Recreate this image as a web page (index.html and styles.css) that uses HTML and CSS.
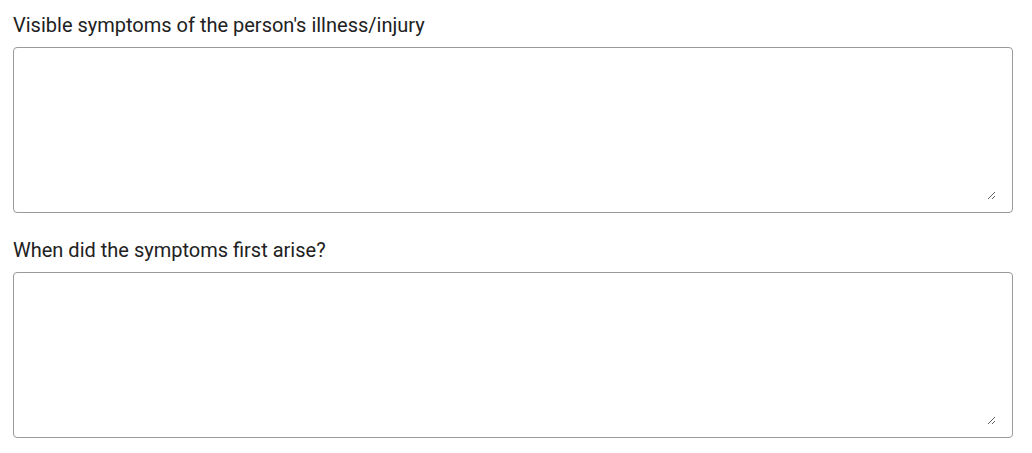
FILE: index.html
```html
<!DOCTYPE html>
<html>
<head>
<meta charset="utf-8">
<link rel="stylesheet" href="styles.css">
</head>
<body>
<form class="form">
  <div class="field">
    <label class="label" for="symptoms">Visible symptoms of the person's illness/injury</label>
    <div class="box"><textarea class="input" id="symptoms"></textarea></div>
  </div>
  <div class="field">
    <label class="label" for="arise">When did the symptoms first arise?</label>
    <div class="box"><textarea class="input" id="arise"></textarea></div>
  </div>
</form>
</body>
</html>
```
FILE: styles.css
```css
html, body {
  margin: 0;
  padding: 0;
  background: #ffffff;
}
body {
  font-family: Roboto, "Liberation Sans", Arial, sans-serif;
  color: #212121;
}
.form {
  display: flex;
  flex-direction: column;
  gap: 25px;
  padding: 13px 19px 0 13px;
}
.field {
  display: flex;
  flex-direction: column;
  gap: 10px;
}
.label {
  font-size: 20px;
  line-height: 24px;
}
.box {
  box-sizing: border-box;
  width: 1000px;
  height: 166px;
  display: flex;
  padding: 12px 16px 12px 12px;
  border: 1px solid #9a9a9a;
  border-radius: 4px;
  background: #ffffff;
}
.input {
  flex: 1;
  margin: 0;
  padding: 0;
  border: none;
  outline: none;
  background: transparent;
  font: inherit;
  color: inherit;
  resize: vertical;
}
```
